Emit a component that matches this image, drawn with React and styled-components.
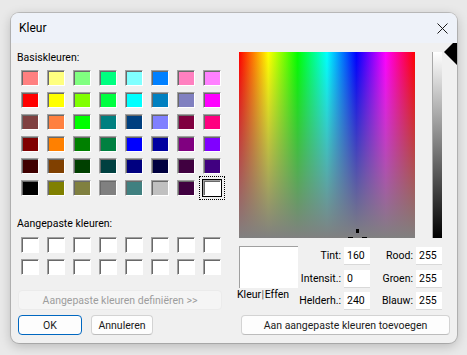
import React from 'react';
import styled, { createGlobalStyle } from 'styled-components';

const Global = createGlobalStyle`
  html, body { margin: 0; padding: 0; background: #e9e9e9; }
  body { font-family: "Segoe UI", Roboto, "Noto Sans", sans-serif; color: #000; }
  #root { width: 467px; height: 355px; }
`;

const Page = styled.div`
  width: 467px;
  height: 355px;
  box-sizing: border-box;
  padding: 13px 10px 12px 11px;
  display: flex;
`;

const Dialog = styled.div`
  width: 446px;
  height: 330px;
  border-radius: 8px;
  background: #f0f0f0;
  box-shadow: 0 0 0 1px rgba(0, 0, 0, 0.16), 0 3px 12px rgba(0, 0, 0, 0.22);
  overflow: hidden;
  display: flex;
  flex-direction: column;
`;

const TitleBar = styled.div`
  height: 30px;
  flex: none;
  background: #eef2f9;
  display: flex;
  align-items: center;
  justify-content: space-between;
  padding: 0 9px 0 8px;
  font-size: 12px;
`;

const CloseButton = styled.div`
  width: 11px;
  height: 11px;
  display: flex;
`;

const Body = styled.div`
  position: relative;
  flex: 1;
  display: flex;
  padding: 8px 0 8px 6px;
  overflow: hidden;
  font-size: 10.5px;
`;

const LeftCol = styled.div`
  width: 206px;
  display: flex;
  flex-direction: column;
`;

const Label = styled.div`
  height: 14px;
  line-height: 14px;
  margin-top: ${p => p.$top || 0}px;
  white-space: nowrap;
`;

const SwatchGrid = styled.div`
  display: grid;
  grid-template-columns: repeat(8, 18px);
  grid-auto-rows: 16px;
  column-gap: 8px;
  row-gap: 6px;
  margin: ${p => p.$top}px 0 0 4px;
`;

const Swatch = styled.div`
  box-sizing: border-box;
  width: 18px;
  height: 16px;
  background: ${p => p.$color};
  border: 1px solid;
  border-color: #a0a0a0 #ffffff #ffffff #a0a0a0;
  box-shadow: inset 1px 1px 0 #696969;
  ${p => p.$selected && `
    outline: 1px dotted #000;
    outline-offset: 3px;
    box-shadow: inset 1px 1px 0 #696969, 0 0 0 1px #000;
  `}
`;

const Button = styled.div`
  box-sizing: border-box;
  height: 20px;
  width: ${p => p.$w}px;
  margin-left: ${p => p.$left || 0}px;
  display: flex;
  align-items: center;
  justify-content: center;
  border-radius: 4px;
  background: ${p => (p.$disabled ? '#f5f5f5' : '#fdfdfd')};
  color: ${p => (p.$disabled ? '#9d9d9d' : '#1b1b1b')};
  border: 1px solid ${p => (p.$primary ? '#0067c0' : p.$disabled ? '#ebebeb' : '#d3d3d3')};
  border-bottom-color: ${p => (p.$primary ? '#0067c0' : p.$disabled ? '#ebebeb' : '#bcbcbc')};
  white-space: nowrap;
`;

const WideRow = styled.div`
  margin-top: ${p => p.$top}px;
  display: flex;
`;

const ButtonRow = styled.div`
  margin-top: 5px;
  display: flex;
  gap: 9px;
  padding-left: 1px;
`;

const RightCol = styled.div`
  margin-left: 16px;
  width: 218px;
  display: flex;
  flex-direction: column;
`;

const TopRow = styled.div`
  position: relative;
  margin-top: 1px;
  display: flex;
  height: 186px;
`;

const Spectrum = styled.div`
  position: relative;
  width: 176px;
  height: 186px;
  overflow: hidden;
  background:
    linear-gradient(to bottom, rgba(128, 128, 128, 0), rgb(128, 128, 128)),
    linear-gradient(to right, #ff0000, #ffff00 16.67%, #00ff00 33.33%, #00ffff 50%, #0000ff 66.67%, #ff00ff 83.33%, #ff0000);
`;

const CrossArm = styled.span`
  position: absolute;
  background: #000;
  left: ${p => p.$x}px;
  top: ${p => p.$y}px;
  width: ${p => p.$w}px;
  height: ${p => p.$h}px;
`;

const LumBar = styled.div`
  box-sizing: border-box;
  margin-left: 17px;
  width: 10px;
  height: 186px;
  border-left: 1px solid #a8a8a8;
  background: linear-gradient(to bottom, #ffffff, #000000);
`;

const Arrow = styled.svg`
  position: absolute;
  left: 205px;
  top: -14px;
`;

const BottomRow = styled.div`
  margin-top: 8px;
  display: flex;
`;

const PreviewCol = styled.div`
  width: 59px;
  display: flex;
  flex-direction: column;
`;

const PreviewBox = styled.div`
  box-sizing: border-box;
  height: 42px;
  background: #ffffff;
  border-top: 1px solid #a0a0a0;
  border-left: 1px solid #a0a0a0;
`;

const PreviewLabel = styled.div`
  margin-left: -2px;
  line-height: 14px;
  white-space: nowrap;
`;

const Sep = styled.span`
  color: #555;
  margin: 0 0.5px;
`;

const Fields = styled.div`
  margin-top: 1px;
  display: grid;
  grid-template-columns: 46px 26px 46px 26px;
  grid-auto-rows: 18px;
  row-gap: 4.5px;
`;

const FieldLabel = styled.div`
  text-align: right;
  padding-right: 3px;
  line-height: 18px;
  white-space: nowrap;
`;

const Field = styled.div`
  box-sizing: border-box;
  background: #ffffff;
  border-bottom: 1px solid #d9d9d9;
  line-height: 17px;
  padding-left: 3px;
`;

const basic = [
  ['#FF8080', '#FFFF80', '#80FF80', '#00FF80', '#80FFFF', '#0080FF', '#FF80C0', '#FF80FF'],
  ['#FF0000', '#FFFF00', '#80FF00', '#00FF40', '#00FFFF', '#0080C0', '#8080C0', '#FF00FF'],
  ['#804040', '#FF8040', '#00FF00', '#008080', '#004080', '#8080FF', '#800040', '#FF0080'],
  ['#800000', '#FF8000', '#008000', '#008040', '#0000FF', '#0000A0', '#800080', '#8000FF'],
  ['#400000', '#804000', '#004000', '#004040', '#000080', '#000040', '#400040', '#400080'],
  ['#000000', '#808000', '#808040', '#808080', '#408080', '#C0C0C0', '#400040', '#FFFFFF'],
];

const fields = [
  ['Tint:', '160', 'Rood:', '255'],
  ['Intensit.:', '0', 'Groen:', '255'],
  ['Helderh.:', '240', 'Blauw:', '255'],
];

export default function App() {
  return (
    <>
      <Global />
      <Page>
        <Dialog>
          <TitleBar>
            <span>Kleur</span>
            <CloseButton>
              <svg width="11" height="11" viewBox="0 0 11 11">
                <path d="M0.5 0.5 L10.5 10.5 M10.5 0.5 L0.5 10.5" stroke="#1a1a1a" strokeWidth="1" />
              </svg>
            </CloseButton>
          </TitleBar>
          <Body>
            <LeftCol>
              <Label>Basiskleuren:</Label>
              <SwatchGrid $top={5}>
                {basic.flat().map((c, i) => (
                  <Swatch key={i} $color={c} $selected={i === 47} />
                ))}
              </SwatchGrid>
              <Label $top={21}>Aangepaste kleuren:</Label>
              <SwatchGrid $top={6}>
                {Array.from({ length: 16 }).map((_, i) => (
                  <Swatch key={i} $color="#ffffff" />
                ))}
              </SwatchGrid>
              <WideRow $top={15}>
                <Button $w={204} $left={1} $disabled>Aangepaste kleuren definiëren &gt;&gt;</Button>
              </WideRow>
              <ButtonRow>
                <Button $w={64} $primary>OK</Button>
                <Button $w={62}>Annuleren</Button>
              </ButtonRow>
            </LeftCol>
            <RightCol>
              <TopRow>
                <Spectrum>
                  <CrossArm $x={117} $y={177} $w={3} $h={4} />
                  <CrossArm $x={109} $y={185} $w={5} $h={3} />
                  <CrossArm $x={123} $y={185} $w={5} $h={3} />
                </Spectrum>
                <LumBar />
                <Arrow width="14" height="28" viewBox="0 0 14 28">
                  <polygon points="0,14 14,0 14,28" fill="#000" />
                </Arrow>
              </TopRow>
              <BottomRow>
                <PreviewCol>
                  <PreviewBox />
                  <PreviewLabel>Kleur<Sep>|</Sep>Effen</PreviewLabel>
                </PreviewCol>
                <Fields>
                  {fields.map((r, i) => (
                    <React.Fragment key={i}>
                      <FieldLabel>{r[0]}</FieldLabel>
                      <Field>{r[1]}</Field>
                      <FieldLabel>{r[2]}</FieldLabel>
                      <Field>{r[3]}</Field>
                    </React.Fragment>
                  ))}
                </Fields>
              </BottomRow>
              <WideRow $top={5}>
                <Button $w={209} $left={2}>Aan aangepaste kleuren toevoegen</Button>
              </WideRow>
            </RightCol>
          </Body>
        </Dialog>
      </Page>
    </>
  );
}
